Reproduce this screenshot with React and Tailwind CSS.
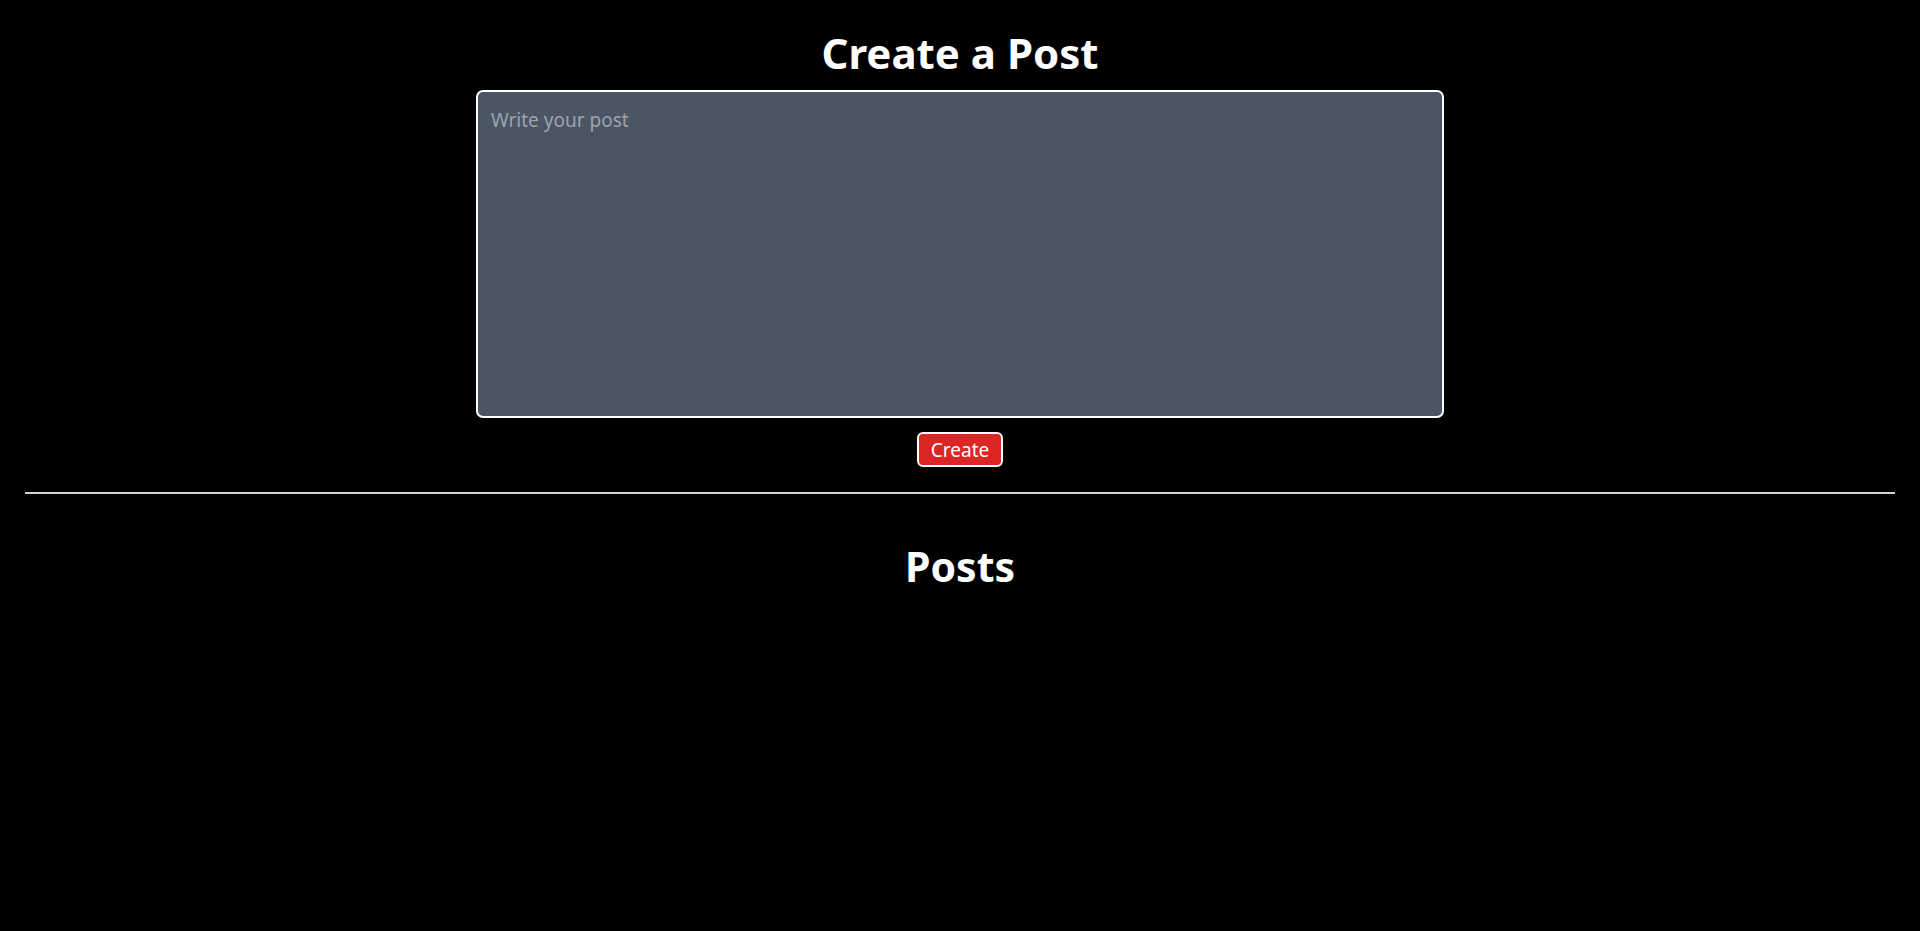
export default function App() {
  return (
    <div
      className="min-h-screen w-full bg-black text-white flex flex-col items-center pt-[26px]"
      style={{ fontFamily: '"Noto Sans", "Open Sans", sans-serif' }}
    >
      <h1 className="text-[42px] leading-[54px] font-bold">Create a Post</h1>

      <textarea
        placeholder="Write your post"
        className="mt-[10px] w-[968px] h-[328px] bg-[#4b5563] border-2 border-white rounded-[7px] px-[13px] pt-[14px] pb-[8px] text-[19px] text-white placeholder:text-[#9ca3af] outline-none resize-none"
      />

      <button className="mt-[14px] w-[86px] h-[35px] pt-[2px] bg-[#dc2626] border-2 border-white rounded-[6px] text-[19px] leading-none text-white">
        Create
      </button>

      <div className="mt-[25px] w-full px-[25px]">
        <hr className="border-0 h-[1.5px] bg-[#d4d4d4]" />
      </div>

      <h2 className="mt-[45px] text-[41px] leading-[54px] font-bold">Posts</h2>
    </div>
  );
}
